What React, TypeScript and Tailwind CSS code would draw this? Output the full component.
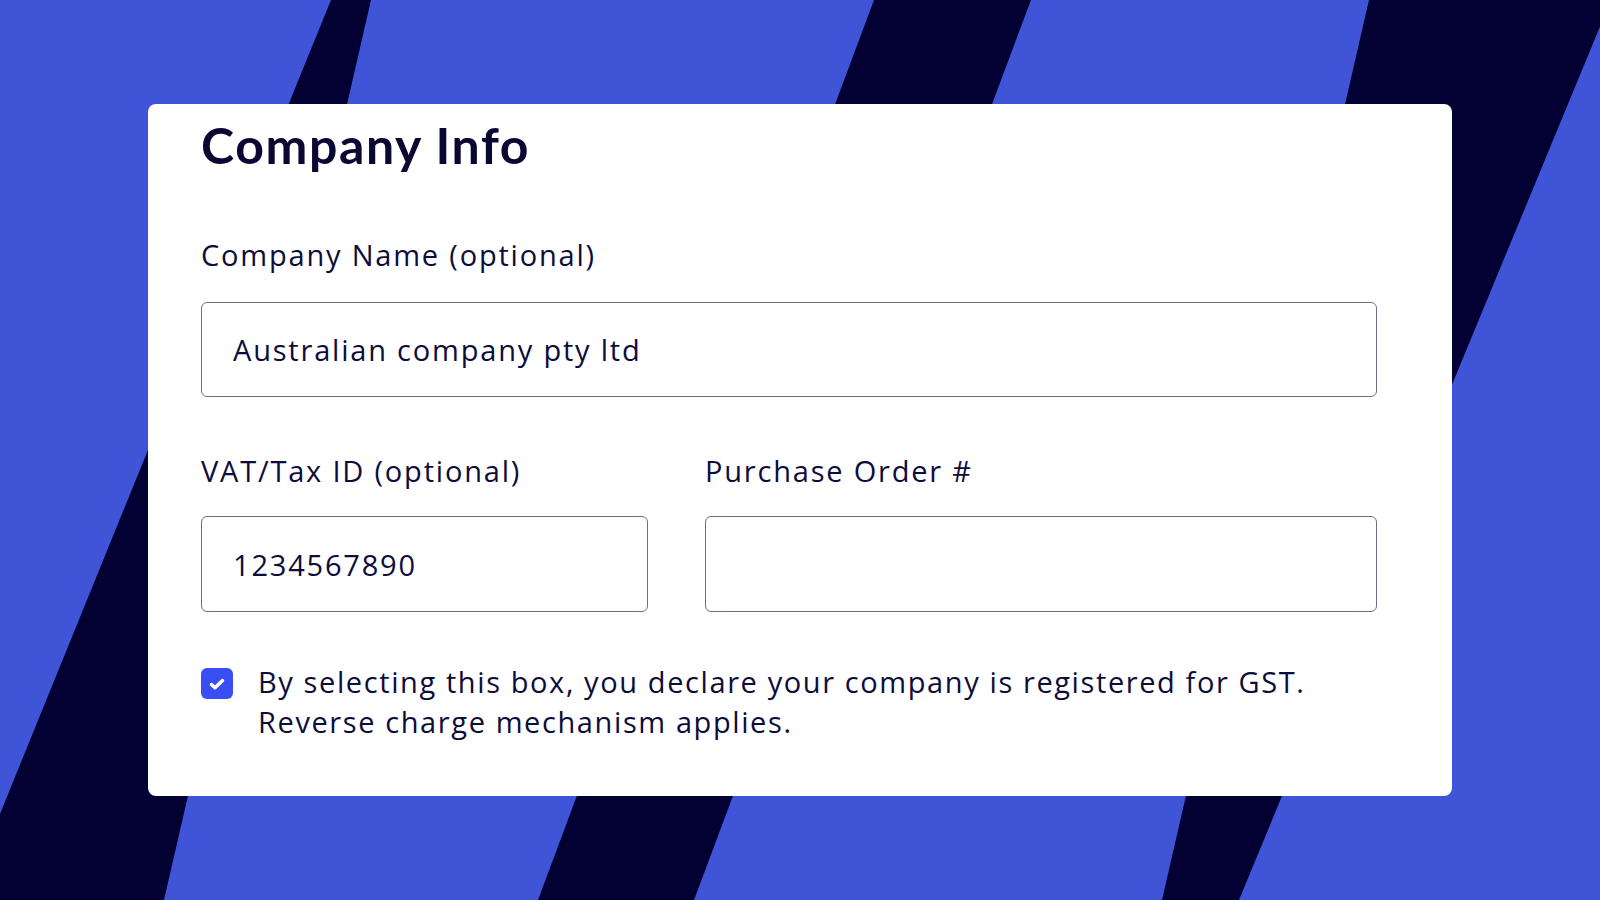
import { useState } from 'react'

const body = { fontFamily: '"Open Sans", "Noto Sans", sans-serif' }
const display = { fontFamily: 'Lato, "Noto Sans", sans-serif' }

function Backdrop() {
  return (
    <svg className="absolute inset-0 h-full w-full" viewBox="0 0 1600 900" preserveAspectRatio="none" aria-hidden>
      <rect width="1600" height="900" fill="#3f54d7" />
      <polygon points="331,0 371,0 164,900 -35,900" fill="#030033" />
      <polygon points="874,0 1031,0 694,900 538,900" fill="#030033" />
      <polygon points="1369,0 1611,0 1239,900 1162,900" fill="#030033" />
    </svg>
  )
}

function Field({ label, value, box = 'mt-[29px] h-[95px]', className = '' }: { label: string; value?: string; box?: string; className?: string }) {
  return (
    <label className={`flex flex-col ${className}`}>
      <span className="text-[29px] leading-[36px] tracking-[1.8px] text-[#0e0c3b]">{label}</span>
      <input
        defaultValue={value}
        className={`${box} w-full rounded-[6px] border-[1.5px] border-[#6f6c8e] bg-white px-[31px] text-[29px] tracking-[1.8px] text-[#0e0c3b] outline-none`}
        style={body}
      />
    </label>
  )
}

export default function App() {
  const [gst, setGst] = useState(true)

  return (
    <div className="relative flex h-[900px] w-[1600px] items-center justify-center overflow-hidden" style={body}>
      <Backdrop />
      <div className="relative flex h-[692px] w-[1304px] flex-col rounded-[8px] bg-white pl-[53px] pr-[75px] pt-[16px]">
        <h1 className="text-[50px] font-bold leading-[50px] tracking-[1.6px] text-[#0a0833]" style={display}>
          Company Info
        </h1>

        <Field label="Company Name (optional)" value="Australian company pty ltd" className="mt-[67px]" />

        <div className="mt-[56px] grid grid-cols-[447px_1fr] gap-[57px]">
          <Field label="VAT/Tax ID (optional)" value="1234567890" box="mt-[27px] h-[96px]" />
          <Field label="Purchase Order #" box="mt-[27px] h-[96px]" />
        </div>

        <div className="mt-[50px] flex items-start gap-[25px]">
          <button
            type="button"
            onClick={() => setGst(!gst)}
            className={`mt-[6px] flex h-[31px] w-[32px] shrink-0 items-center justify-center rounded-[6px] ${gst ? 'bg-[#3a4ff3]' : 'border-2 border-[#6f6c8e] bg-white'}`}
          >
            {gst && (
              <svg viewBox="0 0 20 20" className="h-[20px] w-[20px]">
                <path d="M4.5 10.5l3.5 3.3 7.5-7.3" fill="none" stroke="white" strokeWidth="3.4" strokeLinecap="round" strokeLinejoin="round" />
              </svg>
            )}
          </button>
          <p className="text-[29px] leading-[40px] tracking-[1.6px] text-[#0e0c3b]">
            By selecting this box, you declare your company is registered for GST.
            <br />
            Reverse charge mechanism applies.
          </p>
        </div>
      </div>
    </div>
  )
}
